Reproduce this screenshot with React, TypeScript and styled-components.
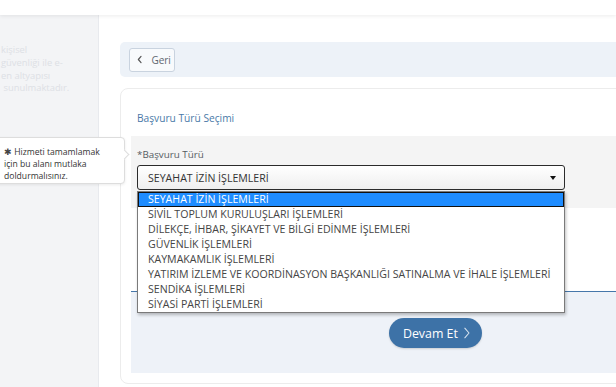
import styled, { createGlobalStyle } from "styled-components";

const GlobalStyle = createGlobalStyle`
  html, body {
    margin: 0;
    padding: 0;
    width: 616px;
    height: 387px;
    overflow: hidden;
    background: #ffffff;
    font-family: "Open Sans", "Liberation Sans", sans-serif;
  }
  * { box-sizing: border-box; }
`;

const Page = styled.div`
  position: relative;
  width: 616px;
  height: 387px;
  overflow: hidden;
  display: flex;
  flex-direction: column;
`;

const Header = styled.div`
  height: 15px;
  flex-shrink: 0;
  background: #ffffff;
  box-shadow: 0 1px 4px rgba(0, 0, 0, 0.08);
  position: relative;
  z-index: 1;
`;

const Body = styled.div`
  flex: 1;
  display: flex;
  min-height: 0;
`;

const Sidebar = styled.aside`
  width: 99px;
  flex-shrink: 0;
  background: #f3f4f6;
  border-right: 1px solid #e8eaee;
  padding-top: 29px;
  overflow: hidden;
`;

const FadedText = styled.p`
  margin: 0;
  padding-left: 1px;
  font-size: 9.4px;
  line-height: 12.8px;
  color: #dde0e5;
  white-space: nowrap;
`;

const Main = styled.main`
  flex: 1;
  min-width: 0;
  background: #ffffff;
  padding: 27px 0 0 21px;
  overflow: hidden;
`;

const Column = styled.div`
  width: 630px;
  display: flex;
  flex-direction: column;
  gap: 11px;
`;

const BackBar = styled.div`
  height: 35px;
  background: #edf2f8;
  border-radius: 5px;
  display: flex;
  align-items: center;
  padding-left: 9px;
`;

const BackButton = styled.button`
  height: 24px;
  width: 46px;
  display: flex;
  align-items: center;
  gap: 9px;
  padding: 0 0 0 7px;
  border: 1px solid #c9d3df;
  border-radius: 3px;
  background: #f8fafc;
  font-family: inherit;
  font-size: 10px;
  color: #5f6670;
`;

const Card = styled.section`
  border: 1px solid #ececec;
  border-radius: 8px;
  padding: 22px 10px 10px 10px;
  background: #ffffff;
`;

const CardTitle = styled.h3`
  margin: 0 0 11px 6px;
  font-size: 10.2px;
  line-height: 14px;
  font-weight: 400;
  color: #4a79a8;
`;

const FieldSection = styled.div`
  background: #f4f4f4;
  padding: 12px 0 18px 6px;
`;

const Label = styled.label`
  display: block;
  font-size: 9.8px;
  line-height: 14px;
  color: #555b62;
  margin-bottom: 3px;
`;

const SelectWrap = styled.div`
  position: relative;
  width: 428px;
`;

const SelectBox = styled.div`
  height: 25px;
  border: 1px solid #2b2b2b;
  border-radius: 3px;
  background: linear-gradient(#ffffff, #efefef);
  display: flex;
  align-items: center;
  justify-content: space-between;
  padding: 0 8px 0 10px;
  font-size: 10.6px;
  color: #333;
`;

const Caret = styled.span`
  width: 0;
  height: 0;
  border-left: 3.5px solid transparent;
  border-right: 3.5px solid transparent;
  border-top: 4px solid #111;
`;

const Dropdown = styled.ul`
  position: absolute;
  top: 100%;
  left: 0;
  width: 428px;
  margin: 1px 0 0;
  padding: 0;
  list-style: none;
  background: #ffffff;
  border: 1px solid #7a7a7a;
  box-shadow: 1px 2px 3px rgba(0, 0, 0, 0.25);
  z-index: 5;
`;

const Option = styled.li<{ $active?: boolean }>`
  height: 15px;
  line-height: 15px;
  padding-left: 10px;
  font-size: 10.6px;
  white-space: nowrap;
  color: ${(p) => (p.$active ? "#ffffff" : "#454545")};
  background: ${(p) => (p.$active ? "#1e8cff" : "transparent")};
  outline: ${(p) => (p.$active ? "1px solid #111" : "none")};
  outline-offset: -1px;
`;

const Spacer = styled.div`
  height: 83px;
`;

const ActionSection = styled.div`
  border-top: 1px solid #4677aa;
  background: #eef2f8;
  height: 82px;
  display: flex;
  justify-content: center;
  padding-top: 26px;
`;

const PrimaryButton = styled.button`
  height: 30px;
  width: 93px;
  border: none;
  border-radius: 15px;
  background: #3d72a7;
  color: #ffffff;
  font-family: inherit;
  font-size: 12.4px;
  display: flex;
  align-items: center;
  justify-content: center;
  gap: 5px;
  padding: 0 0 0 3px;
  box-shadow: 0 1px 2px rgba(0, 0, 0, 0.15);
`;

const Tooltip = styled.div`
  position: absolute;
  left: -6px;
  top: 137px;
  width: 131px;
  height: 47px;
  background: #ffffff;
  border: 1px solid #dddddd;
  border-radius: 4px;
  box-shadow: 0 1px 3px rgba(0, 0, 0, 0.08);
  padding: 8px 4px 0 9px;
  font-size: 8.6px;
  line-height: 12px;
  color: #333;
  z-index: 6;

  &::after {
    content: "";
    position: absolute;
    right: -4px;
    top: 13px;
    width: 6px;
    height: 6px;
    background: #ffffff;
    border-top: 1px solid #dddddd;
    border-right: 1px solid #dddddd;
    transform: rotate(45deg);
  }
`;

const Star = styled.span`
  color: #444;
`;

const ChevronIcon = ({ dir, color, size }: { dir: "left" | "right"; color: string; size: number }) => (
  <svg width={size * 0.6} height={size} viewBox="0 0 6 10" fill="none">
    <path
      d={dir === "left" ? "M4.5 1.5 L1.5 5 L4.5 8.5" : "M1.5 1 L5 5 L1.5 9"}
      stroke={color}
      strokeWidth={dir === "left" ? 1.3 : 0.9}
      strokeLinecap="round"
      strokeLinejoin="round"
    />
  </svg>
);

const options = [
  "SEYAHAT İZİN İŞLEMLERİ",
  "SİVİL TOPLUM KURULUŞLARI İŞLEMLERİ",
  "DİLEKÇE, İHBAR, ŞİKAYET VE BİLGİ EDİNME İŞLEMLERİ",
  "GÜVENLİK İŞLEMLERİ",
  "KAYMAKAMLIK İŞLEMLERİ",
  "YATIRIM İZLEME VE KOORDİNASYON BAŞKANLIĞI SATINALMA VE İHALE İŞLEMLERİ",
  "SENDİKA İŞLEMLERİ",
  "SİYASİ PARTİ İŞLEMLERİ",
];

export default function App() {
  return (
    <Page>
      <GlobalStyle />
      <Header />
      <Body>
        <Sidebar>
          <FadedText>kişisel</FadedText>
          <FadedText>güvenliği ile e-</FadedText>
          <FadedText>en altyapısı</FadedText>
          <FadedText>&nbsp;sunulmaktadır.</FadedText>
        </Sidebar>
        <Main>
          <Column>
            <BackBar>
              <BackButton>
                <ChevronIcon dir="left" color="#555" size={9} />
                Geri
              </BackButton>
            </BackBar>
            <Card>
              <CardTitle>Başvuru Türü Seçimi</CardTitle>
              <FieldSection>
                <Label>*Başvuru Türü</Label>
                <SelectWrap>
                  <SelectBox>
                    SEYAHAT İZİN İŞLEMLERİ
                    <Caret />
                  </SelectBox>
                  <Dropdown>
                    {options.map((o, i) => (
                      <Option key={o} $active={i === 0}>
                        {o}
                      </Option>
                    ))}
                  </Dropdown>
                </SelectWrap>
              </FieldSection>
              <Spacer />
              <ActionSection>
                <PrimaryButton>
                  Devam Et
                  <ChevronIcon dir="right" color="#d8e4f0" size={12} />
                </PrimaryButton>
              </ActionSection>
            </Card>
          </Column>
        </Main>
      </Body>
      <Tooltip>
        <Star>✱</Star> Hizmeti tamamlamak
        <br />
        için bu alanı mutlaka
        <br />
        doldurmalısınız.
      </Tooltip>
    </Page>
  );
}
